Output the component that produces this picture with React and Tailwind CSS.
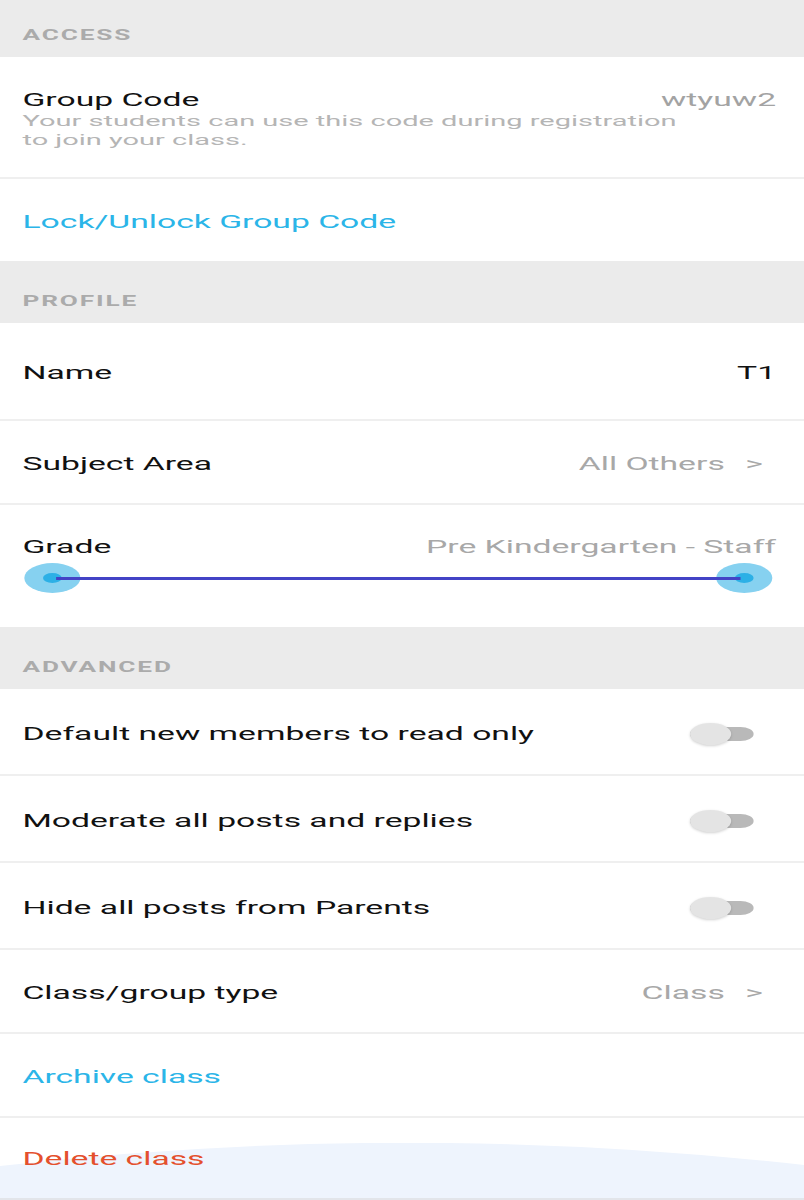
import React from 'react';

// the reference is a phone screen stretched sideways, so the page is laid out
// at phone width and widened with scale-x
function SectionHeader({ title, height = 'h-[62px]' }) {
  return (
    <div className={`${height} flex items-end pb-[14px] pl-3 bg-[#ebebeb]`}>
      <span className="text-[14px] leading-[16px] font-bold tracking-[1px] text-[#ababab]">{title}</span>
    </div>
  );
}

function Row({ height, border = true, className = '', children }) {
  return (
    <div className={`${height} flex items-center pt-[4px] pl-3 pr-[15px] bg-white ${border ? 'border-b-2 border-[#efefef]' : ''} ${className}`}>
      {children}
    </div>
  );
}

function Chevron() {
  return <span className="ml-[11px] text-[#a8a8a8]">&gt;</span>;
}

function Toggle() {
  return (
    <div className="relative w-[34px] h-[22px] flex items-center">
      <div className="h-[14px] w-full rounded-full bg-[#b9b9b9]" />
      <div className="absolute left-0 top-0 size-[22px] rounded-full bg-[#e4e4e4] shadow-[0_1px_2px_rgba(0,0,0,0.18)]" />
    </div>
  );
}

function ToggleRow({ label }) {
  return (
    <Row height="h-[87px]" className="justify-between pr-[27px]">
      <span className="text-[#111]">{label}</span>
      <Toggle />
    </Row>
  );
}

function RangeSlider() {
  return (
    <div className="relative h-[30px] mt-[5px]">
      <div className="absolute left-0 top-0 size-[30px] rounded-full bg-[#86d1f0] flex items-center justify-center">
        <div className="size-[10px] rounded-full bg-[#2cb0e6]" />
      </div>
      <div className="absolute right-0 top-0 size-[30px] rounded-full bg-[#86d1f0] flex items-center justify-center">
        <div className="size-[10px] rounded-full bg-[#2cb0e6]" />
      </div>
      <div className="absolute left-[17px] right-[17px] top-[13.5px] h-[3px] bg-[#4343c6]" />
    </div>
  );
}

export default function App() {
  return (
    <div className="w-[804px] h-[1200px] overflow-hidden bg-white">
      <div className="w-[430px] origin-top-left scale-x-[1.87] font-[Roboto,sans-serif] text-[18px] leading-[22px] text-[#111]">
        <SectionHeader title="ACCESS" height="h-[57px]" />

        <Row height="h-[122px]">
          <div className="flex-1 flex flex-col">
            <div className="flex items-center justify-between">
              <span>Group Code</span>
              <span className="text-[#a3a3a3]">wtyuw2</span>
            </div>
            <p className="mt-[1px] max-w-[358px] text-[15.5px] leading-[19px] text-[#b5b5b5]">
              Your students can use this code during registration to join your class.
            </p>
          </div>
        </Row>

        <Row height="h-[82px]" border={false}>
          <span className="text-[#2bb5e8]">Lock/Unlock Group Code</span>
        </Row>

        <SectionHeader title="PROFILE" />

        <Row height="h-[98px]" className="justify-between">
          <span>Name</span>
          <span>T1</span>
        </Row>

        <Row height="h-[84px]" className="justify-between pr-[22px]">
          <span>Subject Area</span>
          <span className="flex items-center text-[#a8a8a8]">
            All Others
            <Chevron />
          </span>
        </Row>

        <div className="h-[122px] bg-white pl-[13px] pr-[17px] pt-[31px]">
          <div className="flex items-center justify-between">
            <span className="-ml-px">Grade</span>
            <span className="-mr-[2px] text-[#a8a8a8]">Pre Kindergarten - Staff</span>
          </div>
          <RangeSlider />
        </div>

        <SectionHeader title="ADVANCED" />

        <ToggleRow label="Default new members to read only" />
        <ToggleRow label="Moderate all posts and replies" />
        <ToggleRow label="Hide all posts from Parents" />

        <Row height="h-[84px]" className="justify-between pr-[22px]">
          <span>Class/group type</span>
          <span className="flex items-center text-[#a8a8a8]">
            Class
            <Chevron />
          </span>
        </Row>

        <Row height="h-[84px]">
          <span className="text-[#2bb5e8]">Archive class</span>
        </Row>

        <div className="relative h-[82px] flex items-center pt-[2px] pl-3 bg-white border-b-2 border-[#e2e5ea]">
          <svg className="absolute left-0 bottom-0 w-full h-[55px]" viewBox="0 0 430 55" preserveAspectRatio="none">
            <path d="M0 23 Q215 -23 430 22 L430 55 L0 55 Z" fill="#eef4fd" />
          </svg>
          <span className="relative text-[#e4502d]">Delete class</span>
        </div>
      </div>
    </div>
  );
}
